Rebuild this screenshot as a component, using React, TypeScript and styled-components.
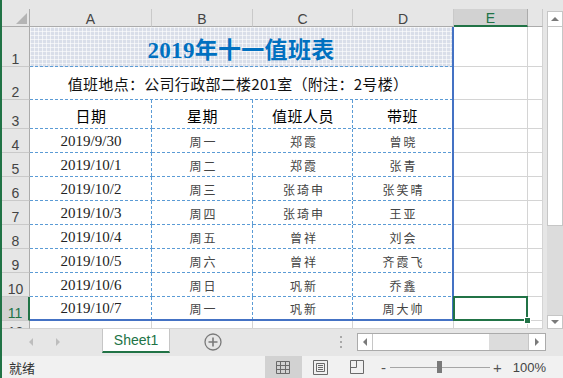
import React from 'react';
import styled, { createGlobalStyle, css } from 'styled-components';

const GREEN = '#217346';
const DASH = '#5b9bd5';
const THICK = '#4472c4';

const GlobalStyle = createGlobalStyle`
  *, *::before, *::after { box-sizing: border-box; }
  html, body { margin: 0; padding: 0; background: #e6e6e6; }
  body {
    font-family: "Liberation Sans", "Noto Sans CJK SC", sans-serif;
    overflow: hidden;
  }
`;

const Window = styled.div`
  width: 563px;
  height: 378px;
  border-left: 2px solid ${GREEN};
  background: #e6e6e6;
  display: flex;
  flex-direction: column;
  overflow: hidden;
`;

const TopBand = styled.div`
  height: 9px;
  flex: none;
`;

const Main = styled.div`
  display: flex;
  height: 320px;
  flex: none;
`;

const Sheet = styled.div`
  display: grid;
  grid-template-columns: 28px 122px 101px 100px 101px 74px 15px;
  grid-template-rows: 18px 40px 33px 29px repeat(8, 24px) 8px;
  width: 541px;
  height: 320px;
  background: #fff;
  overflow: hidden;
`;

/* headers */

const Corner = styled.div`
  background: #e6e6e6;
  border-right: 1px solid #ababab;
  border-bottom: 1px solid #ababab;
  display: flex;
  align-items: flex-end;
  justify-content: flex-end;
  padding: 0 2px 2px 0;
`;

const ColHead = styled.div<{ $active?: boolean }>`
  background: ${p => (p.$active ? '#d2d2d2' : '#e6e6e6')};
  color: ${p => (p.$active ? GREEN : '#444')};
  border-right: 1px solid ${p => (p.$active ? '#ababab' : '#c9c9c9')};
  border-bottom: ${p => (p.$active ? `2px solid ${GREEN}` : '1px solid #ababab')};
  display: flex;
  align-items: center;
  justify-content: center;
  padding-top: 2px;
  font-size: 14px;
  line-height: 14px;
`;

const RowHead = styled.div<{ $active?: boolean; $cut?: boolean }>`
  background: ${p => (p.$active ? '#d2d2d2' : '#e6e6e6')};
  color: ${p => (p.$active ? GREEN : '#444')};
  border-right: ${p => (p.$active ? `2px solid ${GREEN}` : '1px solid #ababab')};
  border-bottom: 1px solid #c9c9c9;
  display: flex;
  justify-content: center;
  align-items: ${p => (p.$cut ? 'flex-start' : 'flex-end')};
  padding-top: ${p => (p.$cut ? '4px' : '0')};
  font-size: 14px;
  line-height: 14px;
  overflow: hidden;
`;

/* table cells */

type Edge = 'dash' | 'thick';

interface EdgeProps {
  $right?: Edge;
  $bottom?: Edge;
}

const dashH = `repeating-linear-gradient(90deg, ${DASH} 0 3px, transparent 3px 5px)`;
const dashV = `repeating-linear-gradient(180deg, ${DASH} 0 3px, transparent 3px 5px)`;

const edges = ({ $right = 'dash', $bottom = 'dash' }: EdgeProps) => {
  const img: string[] = [];
  const size: string[] = [];
  const pos: string[] = [];
  if ($bottom === 'dash') {
    img.push(dashH);
    size.push('100% 1px');
    pos.push('left bottom');
  }
  if ($right === 'dash') {
    img.push(dashV);
    size.push('1px 100%');
    pos.push('right top');
  }
  return css`
    background-image: ${img.length ? img.join(', ') : 'none'};
    background-size: ${size.length ? size.join(', ') : 'auto'};
    background-position: ${pos.length ? pos.join(', ') : '0 0'};
    background-repeat: no-repeat;
    border-right: ${$right === 'thick' ? `2px solid ${THICK}` : '0'};
    border-bottom: ${$bottom === 'thick' ? `2px solid ${THICK}` : '0'};
  `;
};

const TitleCell = styled.div`
  grid-column: span 4;
  display: flex;
  align-items: center;
  justify-content: center;
  border-right: 2px solid ${THICK};
  background-color: #d9dee9;
  background-image: ${dashH},
    linear-gradient(90deg, rgba(255, 255, 255, 0.6) 1px, transparent 1px),
    linear-gradient(rgba(255, 255, 255, 0.6) 1px, transparent 1px);
  background-size: 100% 1px, 4px 4px, 4px 4px;
  background-position: left bottom, 0 0, 0 0;
  background-repeat: no-repeat, repeat, repeat;
  font-family: "Liberation Serif", "Noto Sans CJK SC", serif;
  font-weight: bold;
  font-size: 23px;
  letter-spacing: 0.3px;
  color: #0070c0;
  padding-top: 1px;
`;

const NoteCell = styled.div`
  grid-column: span 4;
  display: flex;
  align-items: center;
  justify-content: center;
  background-color: #fff;
  ${edges({ $right: 'thick', $bottom: 'dash' })}
  font-family: "Noto Sans CJK SC", sans-serif;
  font-size: 15px;
  letter-spacing: 0.3px;
  color: #111;
  padding-right: 6px;
`;

const cellFonts = {
  head: css`
    font-family: "Noto Sans CJK SC", sans-serif;
    font-size: 15px;
    letter-spacing: 0.5px;
    color: #000;
    padding-top: 2px;
  `,
  date: css`
    font-family: "Liberation Serif", serif;
    font-size: 15px;
    color: #222;
  `,
  name: css`
    font-family: "Noto Sans CJK SC", sans-serif;
    font-size: 12px;
    letter-spacing: 2px;
    padding-left: 2px;
    color: #444;
  `,
};

const DataCell = styled.div<EdgeProps & { $kind: keyof typeof cellFonts }>`
  display: flex;
  align-items: center;
  justify-content: center;
  background-color: #fff;
  white-space: nowrap;
  ${p => edges(p)}
  ${p => cellFonts[p.$kind]}
`;

const Blank = styled.div<{ $selected?: boolean }>`
  background: #fff;
  border-right: 1px solid #d4d4d4;
  border-bottom: 1px solid #d4d4d4;
  position: ${p => (p.$selected ? 'relative' : 'static')};
`;

const SelBox = styled.div`
  position: absolute;
  left: -1px;
  top: -1px;
  right: -1px;
  bottom: -1px;
  border: 2px solid ${GREEN};
`;

const FillHandle = styled.div`
  position: absolute;
  right: -4px;
  bottom: -4px;
  width: 7px;
  height: 7px;
  background: ${GREEN};
  border: 1px solid #fff;
`;

/* vertical scrollbar */

const VScroll = styled.div`
  width: 16px;
  margin-left: 4px;
  padding-top: 2px;
  display: flex;
  flex-direction: column;
`;

const ScrollBtn = styled.div<{ $h: number }>`
  height: ${p => p.$h}px;
  flex: none;
  background: #fff;
  border: 1px solid #c6c6c6;
  display: flex;
  align-items: center;
  justify-content: center;
`;

const VThumb = styled.div`
  height: 199px;
  flex: none;
  background: #fff;
  border: 1px solid #c6c6c6;
  border-top: 0;
`;

const VTrack = styled.div`
  flex: 1;
  background: #dcdcdc;
`;

/* sheet tabs */

const TabBar = styled.div`
  height: 27px;
  flex: none;
  display: flex;
  align-items: flex-start;
  background: #e6e6e6;
`;

const TabNav = styled.div`
  width: 100px;
  height: 26px;
  display: flex;
  align-items: center;
  gap: 23px;
  padding-left: 27px;
`;

const SheetTab = styled.div`
  width: 68px;
  height: 24px;
  background: #fff;
  border-left: 1px solid #c6c6c6;
  border-right: 1px solid #c6c6c6;
  border-bottom: 2px solid ${GREEN};
  display: flex;
  align-items: center;
  justify-content: center;
  font-size: 14px;
  color: ${GREEN};
`;

const AddSheet = styled.div`
  margin-left: 34px;
  height: 26px;
  display: flex;
  align-items: center;
`;

const Dots = styled.div`
  margin-left: auto;
  height: 26px;
  display: flex;
  flex-direction: column;
  justify-content: center;
  gap: 3px;
  & > span {
    width: 2px;
    height: 2px;
    background: #a8a8a8;
  }
`;

const HScroll = styled.div`
  width: 189px;
  height: 18px;
  margin: 4px 17px 0 15px;
  display: flex;
  border: 1px solid #ababab;
  background: #fff;
`;

const HBtn = styled.div<{ $w: number; $left?: boolean }>`
  width: ${p => p.$w}px;
  flex: none;
  display: flex;
  align-items: center;
  justify-content: center;
  border-right: ${p => (p.$left ? '1px solid #c6c6c6' : '0')};
  border-left: ${p => (p.$left ? '0' : '1px solid #c6c6c6')};
`;

const HThumb = styled.div`
  width: 116px;
  flex: none;
  background: #fff;
`;

const HTrack = styled.div`
  flex: 1;
  background: #dcdcdc;
`;

/* status bar */

const StatusBar = styled.div`
  height: 22px;
  flex: none;
  display: flex;
  align-items: center;
  background: #f1f1f1;
  padding-left: 7px;
`;

const StatusText = styled.span`
  font-family: "Noto Sans CJK SC", sans-serif;
  font-size: 13px;
  color: #333;
`;

const ViewBtn = styled.div<{ $active?: boolean }>`
  width: 37px;
  height: 22px;
  display: flex;
  align-items: center;
  justify-content: center;
  background: ${p => (p.$active ? '#d2d2d2' : 'transparent')};
`;

const ViewGroup = styled.div`
  margin-left: auto;
  display: flex;
  align-items: center;
`;

const ZoomSign = styled.span<{ $gap: number }>`
  margin-left: ${p => p.$gap}px;
  font-size: 15px;
  line-height: 15px;
  color: #555;
`;

const Slider = styled.div`
  width: 100px;
  height: 12px;
  margin-left: 4px;
  display: flex;
  align-items: center;
  justify-content: center;
  background: linear-gradient(#a6a6a6, #a6a6a6) center / 100% 1px no-repeat;
`;

const SliderKnob = styled.div`
  width: 5px;
  height: 12px;
  background: #7a7a7a;
`;

const ZoomText = styled.span`
  margin: 0 17px 0 11px;
  font-size: 13px;
  color: #444;
`;

/* data */

const rows = [
  ['2019/9/30', '周一', '郑霞', '曾晓'],
  ['2019/10/1', '周二', '郑霞', '张青'],
  ['2019/10/2', '周三', '张琦申', '张笑晴'],
  ['2019/10/3', '周四', '张琦申', '王亚'],
  ['2019/10/4', '周五', '曾祥', '刘会'],
  ['2019/10/5', '周六', '曾祥', '齐霞飞'],
  ['2019/10/6', '周日', '巩新', '乔鑫'],
  ['2019/10/7', '周一', '巩新', '周大帅'],
];

const heads = ['日期', '星期', '值班人员', '带班'];
const cols = ['A', 'B', 'C', 'D', 'E', ''];

const Tri = ({ dir, color = '#8a8a8a', size = 4 }: { dir: 'up' | 'down' | 'left' | 'right'; color?: string; size?: number }) => {
  const s = size;
  const pts = {
    up: `0,${s} ${s},0 ${s * 2},${s}`,
    down: `0,0 ${s * 2},0 ${s},${s}`,
    left: `${s},0 ${s},${s * 2} 0,${s}`,
    right: `0,0 0,${s * 2} ${s},${s}`,
  }[dir];
  const vertical = dir === 'up' || dir === 'down';
  return (
    <svg width={vertical ? s * 2 : s} height={vertical ? s : s * 2}>
      <polygon points={pts} fill={color} />
    </svg>
  );
};

export default function App(): JSX.Element {
  return (
    <Window>
      <GlobalStyle />
      <TopBand />
      <Main>
        <Sheet>
          <Corner>
            <svg width="11" height="11">
              <polygon points="11,0 11,11 0,11" fill="#b4b4b4" />
            </svg>
          </Corner>
          {cols.map((c, i) => (
            <ColHead key={i} $active={c === 'E'}>
              {c}
            </ColHead>
          ))}

          <RowHead>1</RowHead>
          <TitleCell>2019年十一值班表</TitleCell>
          <Blank />
          <Blank />

          <RowHead>2</RowHead>
          <NoteCell>值班地点：公司行政部二楼201室（附注：2号楼）</NoteCell>
          <Blank />
          <Blank />

          <RowHead>3</RowHead>
          {heads.map((h, i) => (
            <DataCell key={h} $kind="head" $right={i === 3 ? 'thick' : 'dash'}>
              {h}
            </DataCell>
          ))}
          <Blank />
          <Blank />

          {rows.map((r, ri) => {
            const last = ri === rows.length - 1;
            return (
              <React.Fragment key={ri}>
                <RowHead $active={last}>{ri + 4}</RowHead>
                {r.map((v, ci) => (
                  <DataCell
                    key={ci}
                    $kind={ci === 0 ? 'date' : 'name'}
                    $right={ci === 3 ? 'thick' : 'dash'}
                    $bottom={last ? 'thick' : 'dash'}
                  >
                    {v}
                  </DataCell>
                ))}
                <Blank $selected={last}>
                  {last && (
                    <>
                      <SelBox />
                      <FillHandle />
                    </>
                  )}
                </Blank>
                <Blank />
              </React.Fragment>
            );
          })}

          <RowHead $cut>12</RowHead>
          {cols.map((c, i) => (
            <Blank key={i} />
          ))}
        </Sheet>
        <VScroll>
          <ScrollBtn $h={16}>
            <Tri dir="up" color="#7a7a7a" />
          </ScrollBtn>
          <VThumb />
          <VTrack />
          <ScrollBtn $h={14}>
            <Tri dir="down" color="#7a7a7a" />
          </ScrollBtn>
        </VScroll>
      </Main>

      <TabBar>
        <TabNav>
          <Tri dir="left" color="#bdbdbd" />
          <Tri dir="right" color="#bdbdbd" />
        </TabNav>
        <SheetTab>Sheet1</SheetTab>
        <AddSheet>
          <svg width="18" height="18" viewBox="0 0 18 18">
            <circle cx="9" cy="9" r="8" fill="none" stroke="#7a7a7a" strokeWidth="1.3" />
            <path d="M9 4.5v9M4.5 9h9" stroke="#7a7a7a" strokeWidth="1.6" />
          </svg>
        </AddSheet>
        <Dots>
          <span />
          <span />
          <span />
        </Dots>
        <HScroll>
          <HBtn $w={15} $left>
            <Tri dir="left" color="#7a7a7a" />
          </HBtn>
          <HThumb />
          <HTrack />
          <HBtn $w={17}>
            <Tri dir="right" color="#7a7a7a" />
          </HBtn>
        </HScroll>
      </TabBar>

      <StatusBar>
        <StatusText>就绪</StatusText>
        <ViewGroup>
          <ViewBtn $active>
            <svg width="14" height="13" viewBox="0 0 14 13">
              <path
                d="M0.5 0.5h13v12h-13z M4.5 0.5v12 M9.5 0.5v12 M0.5 4.5h13 M0.5 8.5h13"
                fill="none"
                stroke="#6a6a6a"
              />
            </svg>
          </ViewBtn>
          <ViewBtn>
            <svg width="15" height="15" viewBox="0 0 15 15">
              <path d="M0.5 0.5h14v14h-14z M3.5 3.5h8v8h-8z" fill="none" stroke="#6a6a6a" />
              <path d="M5 5.5h5 M5 7.5h5 M5 9.5h5" stroke="#6a6a6a" />
            </svg>
          </ViewBtn>
          <ViewBtn>
            <svg width="14" height="14" viewBox="0 0 14 14">
              <path d="M0.5 0.5h13v13h-13z M6.5 0.5v7 M0.5 7.5h6" fill="none" stroke="#6a6a6a" />
            </svg>
          </ViewBtn>
          <ZoomSign $gap={5}>-</ZoomSign>
          <Slider>
            <SliderKnob />
          </Slider>
          <ZoomSign $gap={3}>+</ZoomSign>
          <ZoomText>100%</ZoomText>
        </ViewGroup>
      </StatusBar>
    </Window>
  );
}
